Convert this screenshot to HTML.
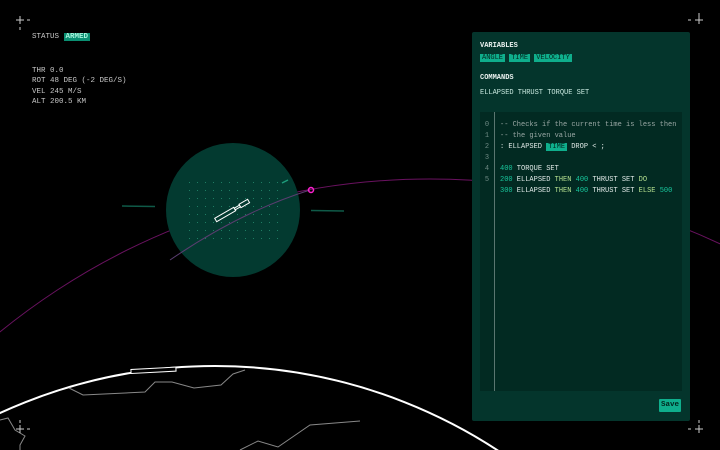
<!DOCTYPE html>
<html><head><style>
*{margin:0;padding:0;box-sizing:border-box}
html,body{width:720px;height:450px;overflow:hidden}
body{background:#000;position:relative;font-family:"Liberation Mono",monospace;color:#c8c8c8;font-size:7.5px}
.a{position:absolute}
.tag{background:#0fae8c;color:#02261e;padding:0 2px}
.panel{left:472px;top:32px;width:218px;height:389px;background:#04352c;border-radius:2px}
.h{font-weight:bold;color:#e8f0ee;font-size:7px}
.code{left:8px;top:80px;width:202px;height:279px;background:#022a22;overflow:hidden;font-size:7px}
.code .ln{position:absolute;left:0;top:8px;width:14px;text-align:center;color:#6f8a84;line-height:11px}
.code .g{position:absolute;left:14px;top:0;width:1px;height:279px;background:#5a7670}
.code .t{position:absolute;left:20px;top:8px;line-height:11px;color:#dfe8e6;white-space:pre}
.c{color:#9aa8a5}.n{color:#18c79d}.k{color:#b5e08f}
</style></head><body>
<svg class="a" style="left:0;top:0" width="720" height="450">
<circle cx="430" cy="860" r="681" fill="none" stroke="#6a1260" stroke-width="1"/>
<circle cx="233" cy="210" r="67" fill="#033a30"/>
<line x1="122" y1="206" x2="155" y2="206.5" stroke="#0f5a48" stroke-width="1.5"/>
<line x1="311" y1="210.5" x2="344" y2="211" stroke="#0f5a48" stroke-width="1.5"/>
<line x1="282" y1="183" x2="288" y2="180" stroke="#1d9c7b" stroke-width="1.5"/>
<path d="M170 260 Q 240 212 310 190" fill="none" stroke="#5a3d70" stroke-width="1"/>
<g fill="#1f7d64" transform="translate(189,182)">
<path id="row" d="M0 0h1v1h-1zM8 0h1v1h-1zM16 0h1v1h-1zM24 0h1v1h-1zM32 0h1v1h-1zM40 0h1v1h-1zM48 0h1v1h-1zM56 0h1v1h-1zM64 0h1v1h-1zM72 0h1v1h-1zM80 0h1v1h-1zM88 0h1v1h-1z"/>
<use href="#row" y="8"/><use href="#row" y="16"/><use href="#row" y="24"/><use href="#row" y="32"/><use href="#row" y="40"/><use href="#row" y="48"/><use href="#row" y="56"/>
</g>
<g transform="translate(233,210) rotate(-30)" fill="none" stroke="#fff" stroke-width="1">
<rect x="-20" y="-2" width="22" height="4"/><rect x="2" y="-1" width="6" height="2"/><rect x="8" y="-2" width="10" height="4"/></g>
<circle cx="311" cy="190" r="2.5" fill="none" stroke="#ff20d0" stroke-width="1.5"/>
<circle cx="215" cy="881" r="515" fill="none" stroke="#fff" stroke-width="2"/>
<g transform="translate(140,371) rotate(-3)"><rect x="-9" y="-2" width="45" height="4" fill="#000" stroke="#fff" stroke-width="1"/></g>
<path d="M69 388 L83 395 L145 392 L155 382 L172 382 L194 388 L221 385 L233 374 L245 370" fill="none" stroke="#888" stroke-width="1"/>
<path d="M0 420 L8 418 L15 430 L25 436 L20 445 L20 450" fill="none" stroke="#888" stroke-width="1"/>
<path d="M240 450 L258 441 L278 447 L310 425 L360 421" fill="none" stroke="#888" stroke-width="1"/>
<g stroke="#ccc" stroke-width="1">
<path d="M16 20h8M20 16v8M27 20h3M20 27v3"/>
<path d="M695 20h8M699 16v8M688 20h3M699 13v3"/>
<path d="M16 429h8M20 425v8M27 429h3M20 420v3"/>
<path d="M695 429h8M699 425v8M688 429h3M699 420v3"/>
</g>
</svg>
<div class="a" style="left:32px;top:33px">STATUS <span class="tag" style="background:#0a8f72;color:#a8f5de;font-weight:bold">ARMED</span></div>
<div class="a" style="left:32px;top:66px;line-height:10.3px">THR 0.0<br>ROT 48 DEG (-2 DEG/S)<br>VEL 245 M/S<br>ALT 200.5 KM</div>
<div class="a panel">
<div class="a h" style="left:8px;top:10px">VARIABLES</div>
<div class="a" style="left:8px;top:22px;font-size:7px"><span class="tag">ANGLE</span> <span class="tag">TIME</span> <span class="tag">VELOCITY</span></div>
<div class="a h" style="left:8px;top:42px">COMMANDS</div>
<div class="a" style="left:8px;top:57px;color:#c8e8df;font-size:7px">ELLAPSED THRUST TORQUE SET</div>
<div class="a code">
<div class="g"></div>
<div class="ln">0<br>1<br>2<br>3<br>4<br>5</div>
<div class="t"><span class="c">-- Checks if the current time is less then
-- the given value</span>
: ELLAPSED <span class="tag">TIME</span> DROP &lt; ;

<span class="n">400</span> TORQUE SET
<span class="n">200</span> ELLAPSED <span class="k">THEN</span> <span class="n">400</span> THRUST SET <span class="k">DO</span>
<span class="n">300</span> ELLAPSED <span class="k">THEN</span> <span class="n">400</span> THRUST SET <span class="k">ELSE</span> <span class="n">500</span></div>
</div>
<div class="a tag" style="left:187px;top:367px;height:13px;line-height:13px;padding:0 2px;font-weight:bold;border-radius:1px">Save</div>
</div>
</body></html>
